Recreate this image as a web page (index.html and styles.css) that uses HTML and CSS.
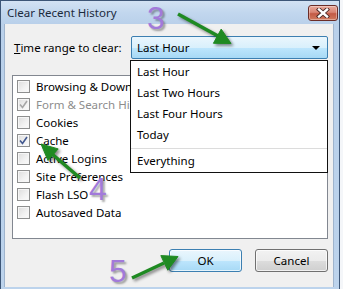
FILE: index.html
```html
<!DOCTYPE html>
<html lang="en">

<head>
  <meta charset="UTF-8">
  <title>Clear Recent History</title>
  <link rel="stylesheet" href="styles.css">
</head>

<body>

  <div class="window">
    <div class="titlebar">
      <span class="title">Clear Recent History</span>
      <span class="close">
        <svg width="14" height="10" viewBox="0 0 14 10">
          <path d="M3 1.5 L11 8.5 M11 1.5 L3 8.5" stroke="#4a2a28" stroke-width="4.2" stroke-linecap="square" fill="none" />
          <path d="M3 1.5 L11 8.5 M11 1.5 L3 8.5" stroke="#fff" stroke-width="2.4" stroke-linecap="square" fill="none" />
        </svg>
      </span>
    </div>

    <div class="client">
      <div class="range-row">
        <label class="range-label"><u>T</u>ime range to clear:</label>
        <div class="combo">
          <span class="combo-text">Last Hour</span>
          <span class="combo-arrow"></span>
          <ul class="popup">
            <li>Last Hour</li>
            <li>Last Two Hours</li>
            <li>Last Four Hours</li>
            <li>Today</li>
            <li class="sep"></li>
            <li>Everything</li>
          </ul>
        </div>
      </div>

      <div class="items">
        <div class="item"><span class="box"></span>Browsing &amp; Download History</div>
        <div class="item disabled"><span class="box"><svg width="9" height="9" viewBox="0 0 9 9"><path d="M1 4.5 L3.5 7.5 L8 1" stroke="#a6a6a6" stroke-width="1.6" fill="none" /></svg></span>Form &amp; Search History</div>
        <div class="item"><span class="box"></span>Cookies</div>
        <div class="item"><span class="box"><svg width="9" height="9" viewBox="0 0 9 9"><path d="M1 4.5 L3.5 7.5 L8 1" stroke="#42588f" stroke-width="1.6" fill="none" /></svg></span>Cache</div>
        <div class="item"><span class="box"></span>Active Logins</div>
        <div class="item"><span class="box"></span>Site Preferences</div>
        <div class="item"><span class="box"></span>Flash LSO</div>
        <div class="item"><span class="box"></span>Autosaved Data</div>
      </div>

      <div class="buttons">
        <button class="btn hot">OK</button>
        <button class="btn">Cancel</button>
      </div>
    </div>

    <!-- annotations drawn over the dialog -->
    <svg class="arrows" width="340" height="289">
      <g fill="#1f8a22" stroke="#1f8a22">
        <line x1="178" y1="14" x2="218" y2="36" stroke-width="3.5" />
        <polygon points="231,43.5 213.4,43.3 221.2,29.1" stroke-width="1" />
        <line x1="80" y1="178" x2="52" y2="154" stroke-width="3.5" />
        <polygon points="41,144 58.2,148.9 48,160.5" stroke-width="1" />
        <line x1="132" y1="278" x2="164" y2="263" stroke-width="3.5" />
        <polygon points="178,256.5 167.8,270.2 160.8,255.6" stroke-width="1" />
      </g>
    </svg>
    <span class="step step3">3</span>
    <span class="step step4">4</span>
    <span class="step step5">5</span>
  </div>

</body>

</html>
```

FILE: styles.css
```css
* {
  box-sizing: border-box;
}

body {
  margin: 0;
  background: #f4f6f9;
  font-family: "Noto Sans", "Open Sans", sans-serif;
  font-size: 11.5px;
  color: #000;
}

.window {
  position: relative;
  width: 340px;
  height: 289px;
  display: flex;
  flex-direction: column;
  border: 1px solid #3d5677;
  border-bottom: none;
  background: linear-gradient(to bottom, #c6d9ee 0, #b9d0ea 24px, #bcd3ec 100%);
  overflow: hidden;
}

.titlebar {
  height: 23px;
  display: flex;
  align-items: center;
  justify-content: space-between;
  background: linear-gradient(to bottom, #d3e2f3 0, #c2d7ee 50%, #b9d0ea 100%);
}

.title {
  padding-left: 6px;
  margin-top: -1px;
  color: #1b2a3c;
}

.close {
  align-self: flex-start;
  margin-top: 4px;
  margin-right: 1px;
  width: 30px;
  height: 16px;
  display: flex;
  align-items: center;
  justify-content: center;
  border: 1px solid #6b2d28;
  border-radius: 3px;
  background: linear-gradient(to bottom, #e9a99b 0, #d98574 45%, #c35a45 55%, #d07a5e 100%);
  box-shadow: inset 0 0 0 1px rgba(255, 255, 255, 0.35);
}

.client {
  flex: 1;
  margin: 0 5px 2px 3px;
  padding: 12px 5px 14px 7px;
  background: #f0f0f0;
  border: 1px solid #9fb4cd;
  border-bottom: none;
  border-top: none;
  display: flex;
  flex-direction: column;
}

/* row with the combo box */
.range-row {
  display: flex;
  align-items: center;
}

.range-label {
  margin-left: 2px;
  margin-top: -1px;
}

.combo {
  position: relative;
  margin-left: auto;
  width: 197px;
  height: 23px;
  display: flex;
  align-items: center;
  padding-left: 5px;
  border: 1px solid #3c7fb1;
  border-radius: 2px;
  background: linear-gradient(to bottom, #eaf6fd 0, #d9f0fc 50%, #bee6fd 50%, #a7d9f5 100%);
}

.combo-text {
  margin-top: -1px;
}

.combo-arrow {
  position: absolute;
  right: 7px;
  top: 9px;
  border-left: 4px solid transparent;
  border-right: 4px solid transparent;
  border-top: 4px solid #000;
}

.popup {
  position: absolute;
  z-index: 2;
  top: 23px;
  left: -2px;
  right: -1px;
  margin: 0;
  padding: 1px 0 0;
  list-style: none;
  background: #fff;
  border: 1px solid #111;
}

.popup li {
  height: 21px;
  line-height: 20px;
  padding-left: 6px;
}

.popup li.sep {
  height: 1px;
  margin: 2px 0;
  background: #dcdcdc;
}

/* checkbox list */
.items {
  margin-top: 16px;
  height: 164px;
  padding-top: 1px;
  background: #fff;
  border: 1px solid #828790;
  overflow: hidden;
}

.item {
  height: 18px;
  display: flex;
  align-items: center;
  padding-left: 4px;
  white-space: nowrap;
}

.item.disabled {
  color: #8d8d8d;
}

.box {
  width: 13px;
  height: 13px;
  margin-right: 6px;
  flex: none;
  display: flex;
  align-items: center;
  justify-content: center;
  border: 1px solid #8e8f8f;
  background: linear-gradient(135deg, #dcdcdc 0, #f2f2f2 60%, #fbfbfb 100%);
  box-shadow: inset 0 0 0 1px #f6f6f6;
}

/* buttons */
.buttons {
  margin-top: 10px;
  display: flex;
  justify-content: flex-end;
  gap: 13px;
}

.btn {
  width: 73px;
  height: 23px;
  padding: 0;
  font-family: inherit;
  font-size: 11.5px;
  color: #000;
  border: 1px solid #707070;
  border-radius: 3px;
  background: linear-gradient(to bottom, #f2f2f2 0, #ebebeb 50%, #dddddd 50%, #cfcfcf 100%);
  box-shadow: inset 0 0 0 1px rgba(255, 255, 255, 0.7);
}

.btn.hot {
  border-color: #3c7fb1;
  background: linear-gradient(to bottom, #eaf6fd 0, #d9f0fc 50%, #bee6fd 50%, #a7d9f5 100%);
}

/* annotations */
.arrows {
  position: absolute;
  left: -1px;
  top: -1px;
  z-index: 3;
  filter: drop-shadow(2px 2px 1.5px rgba(0, 0, 0, 0.45));
}

.step {
  position: absolute;
  z-index: 3;
  font-family: "Liberation Sans", sans-serif;
  font-size: 32px;
  line-height: 32px;
  color: #a27ada;
  text-shadow: 2px 2px 2px rgba(0, 0, 0, 0.35);
}

.step3 {
  left: 146px;
  top: 1px;
}

.step4 {
  left: 88px;
  top: 172px;
}

.step5 {
  left: 108px;
  top: 254px;
}
```
